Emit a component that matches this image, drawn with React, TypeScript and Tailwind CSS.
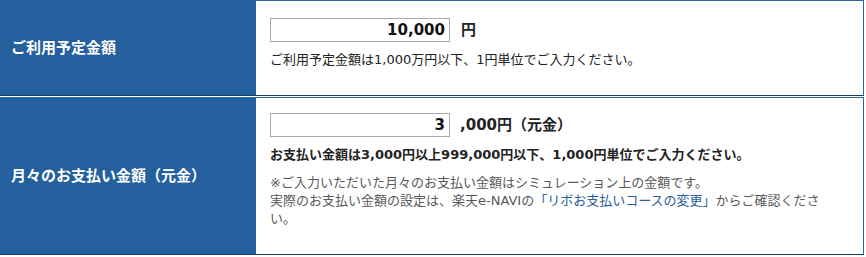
export default function App() {
  const font = { fontFamily: '"DejaVu Sans", "Noto Sans CJK JP", sans-serif' };
  return (
    <div className="w-[864px] bg-white" style={font}>
      {/* ご利用予定金額 */}
      <div className="flex border-t border-r border-b border-t-[#2a65a2] border-r-[#2a65a2] border-b-[#1a3f68]">
        <div className="w-[256px] shrink-0 bg-[#23609d] flex items-center pl-[11px] text-[15px] font-bold text-white">
          ご利用予定金額
        </div>
        <div className="flex-1 pl-[14px] pr-[36px] pt-[17px] pb-[26px]">
          <div className="flex items-center">
            <input
              readOnly
              defaultValue="10,000"
              className="w-[180px] h-[24px] border border-[#a9a9a9] text-right pr-[4px] text-[15px] font-bold text-[#111] outline-none"
              style={font}
            />
            <span className="ml-[11px] text-[15px] font-bold text-[#222]">円</span>
          </div>
          <p className="mt-[9px] text-[13px] leading-[18px] text-[#222]">
            ご利用予定金額は1,000万円以下、1円単位でご入力ください。
          </p>
        </div>
      </div>

      {/* 月々のお支払い金額（元金） */}
      <div className="mt-px flex border-t border-r border-b border-t-[#2a65a2] border-r-[#2a65a2] border-b-[#1a3f68]">
        <div className="w-[256px] shrink-0 bg-[#23609d] flex items-center pl-[11px] text-[15px] font-bold text-white">
          月々のお支払い金額（元金）
        </div>
        <div className="flex-1 pl-[14px] pr-[36px] pt-[15px] pb-[26px]">
          <div className="flex items-center">
            <input
              readOnly
              defaultValue="3"
              className="w-[180px] h-[24px] border border-[#a9a9a9] text-right pr-[4px] text-[15px] font-bold text-[#111] outline-none"
              style={font}
            />
            <span className="ml-[10px] text-[15px] font-bold text-[#222]">,000円（元金）</span>
          </div>
          <p className="mt-[9px] text-[13px] leading-[18px] font-bold text-[#222]">
            お支払い金額は3,000円以上999,000円以下、1,000円単位でご入力ください。
          </p>
          <p className="mt-[10px] text-[13px] leading-[18px] text-[#595959]">
            ※ご入力いただいた月々のお支払い金額はシミュレーション上の金額です。
            <br />
            実際のお支払い金額の設定は、楽天e-NAVIの
            <span className="text-[#2a5d9b]">「リボお支払いコースの変更」</span>
            からご確認ください。
          </p>
        </div>
      </div>
    </div>
  );
}
